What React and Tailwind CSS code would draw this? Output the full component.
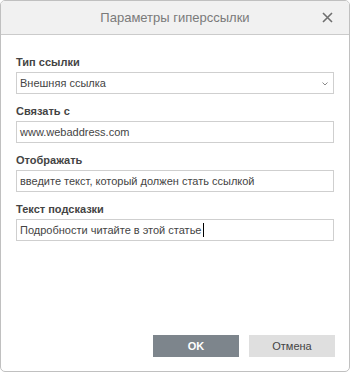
export default function App() {
  const fields = [
    { label: "Тип ссылки", value: "Внешняя ссылка", select: true },
    { label: "Связать с", value: "www.webaddress.com" },
    { label: "Отображать", value: "введите текст, который должен стать ссылкой" },
    { label: "Текст подсказки", value: "Подробности читайте в этой статье", caret: true },
  ];

  return (
    <div className="h-[373px] w-[350px] bg-white font-['Liberation_Sans',Arial,sans-serif]">
      <div className="flex h-[372px] w-[350px] flex-col overflow-hidden rounded-[5px] border border-[#c0c0c0] bg-white">
        <div className="relative flex h-[34px] shrink-0 items-center justify-center border-b border-[#cbcbcb] bg-[#f1f1f1]">
          <span className="text-[13px] text-[#7a7a7a]">Параметры гиперссылки</span>
          <svg
            className="absolute right-[16px] top-[11px]"
            width="11"
            height="11"
            viewBox="0 0 11 11"
          >
            <path d="M1 1L10 10M10 1L1 10" stroke="#6f6f6f" strokeWidth="1.6" />
          </svg>
        </div>

        <div className="flex flex-col gap-[10px] px-[15px] pt-[20px]">
          {fields.map((f) => (
            <div key={f.label} className="flex flex-col">
              <label className="mb-[3px] text-[11px] font-bold leading-[14px] text-[#444]">
                {f.label}
              </label>
              <div className="relative flex h-[22px] items-center border border-[#cfcfcf] bg-white pl-[3px] text-[11px] text-[#444]">
                <span>{f.value}</span>
                {f.caret ? <span className="ml-[1px] h-[14px] w-px bg-black" /> : null}
                {f.select ? (
                  <svg
                    className="absolute right-[5px] top-[9px]"
                    width="6"
                    height="4"
                    viewBox="0 0 6 4"
                  >
                    <path d="M0.5 0.5L3 3L5.5 0.5" stroke="#8a8a8a" fill="none" strokeWidth="1" />
                  </svg>
                ) : null}
              </div>
            </div>
          ))}
        </div>

        <div className="mt-auto flex justify-end gap-[10px] pb-[14px] pr-[14px]">
          <button className="h-[22px] w-[86px] bg-[#7d858c] text-[11px] font-bold text-white">
            OK
          </button>
          <button className="h-[22px] w-[86px] bg-[#dfdfdf] text-[11px] text-[#444]">
            Отмена
          </button>
        </div>
      </div>
    </div>
  );
}
